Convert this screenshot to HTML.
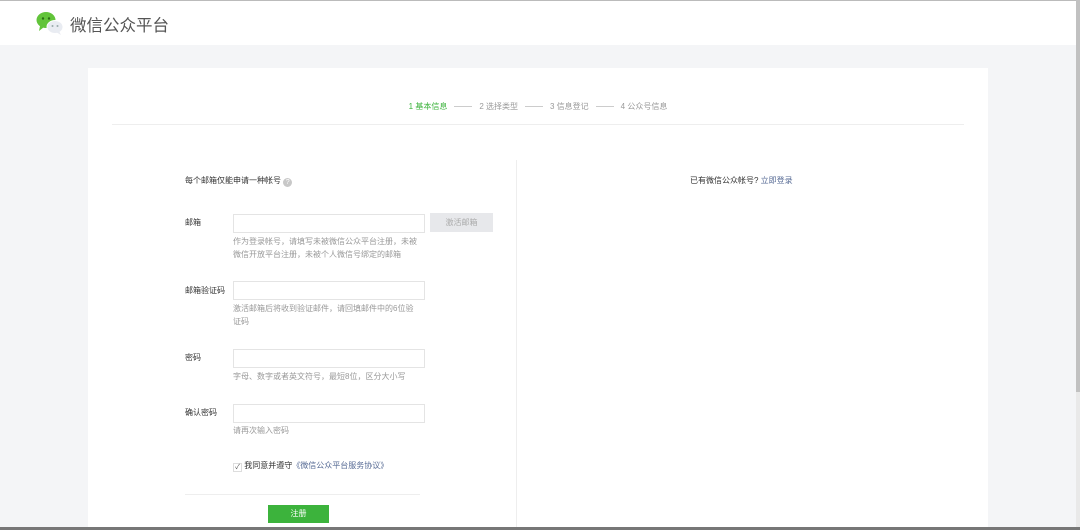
<!DOCTYPE html>
<html><head><meta charset="utf-8"><style>
*{margin:0;padding:0;box-sizing:border-box}
body{width:1080px;height:530px;overflow:hidden;background:#f4f5f7;font-family:"Liberation Sans","Noto Sans CJK SC",sans-serif;position:relative;color:#333}
.top{position:absolute;left:0;top:0;width:1080px;height:1px;background:#bbb}
.hd{position:absolute;left:0;top:1px;width:1076px;height:44px;background:#fff}
.logo{position:absolute;left:70px;top:11px;font-size:16.5px;color:#555}
.sb{position:absolute;right:0;top:0;width:4px;height:530px;background:#e9e9e9}
.sb i{position:absolute;left:0;top:0;width:4px;height:392px;background:#c1c1c1}
.bot{position:absolute;left:0;top:527px;width:1080px;height:3px;background:#777}
.card{position:absolute;left:88px;top:68px;width:900px;height:462px;background:#fff}
.steps{position:absolute;left:0;top:33px;width:900px;text-align:center;font-size:8px;color:#999}
.steps span{margin:0 3px}
.steps .ln{display:inline-block;width:18px;height:1px;background:#ccc;vertical-align:middle;margin:0 4px}
.hr{position:absolute;left:24px;top:56px;width:852px;height:1px;background:#eee}
.vr{position:absolute;left:428px;top:92px;width:1px;height:370px;background:#eee}
.t{position:absolute;font-size:8px;white-space:nowrap}
.lab{color:#333}
.tip{color:#999;line-height:13px;white-space:normal;width:180px}
.inp{position:absolute;width:192px;height:19px;border:1px solid #e4e4e4;background:#fff}
.btn{position:absolute;left:342px;top:145px;width:63px;height:19px;background:#e7e8eb;color:#aaa;font-size:8px;text-align:center;line-height:19px}
.reg{position:absolute;left:180px;top:437px;width:61px;height:18px;background:#3cb33c;color:#fff;font-size:8px;text-align:center;line-height:18px}
a{color:#576b95;text-decoration:none}
</style></head><body>
<div class="top"></div>
<div class="hd">
<svg style="position:absolute;left:35px;top:10px" width="30" height="24" viewBox="0 0 30 24">
<ellipse cx="11" cy="9" rx="9.5" ry="8" fill="#62c43a"/><path d="M5 15 L4 20 L9 16Z" fill="#62c43a"/>
<circle cx="8" cy="7.5" r="1.2" fill="#2a6e14"/><circle cx="14" cy="7.5" r="1.2" fill="#2a6e14"/>
<ellipse cx="20" cy="16" rx="8" ry="6.5" fill="#e9ecf2" stroke="#fff" stroke-width="1"/><path d="M24 20 L26 24 L21 21Z" fill="#e9ecf2"/>
<circle cx="17.5" cy="15" r="1" fill="#9aa"/><circle cx="22.5" cy="15" r="1" fill="#9aa"/></svg>
<div class="logo">微信公众平台</div>
</div>
<div class="card">
<div class="steps"><span style="color:#3cb33c">1 基本信息</span><i class="ln"></i><span>2 选择类型</span><i class="ln"></i><span>3 信息登记</span><i class="ln"></i><span>4 公众号信息</span></div>
<div class="hr"></div>
<div class="vr"></div>
<div class="t lab" style="left:97px;top:107px">每个邮箱仅能申请一种帐号 <span style="display:inline-block;width:9px;height:9px;border-radius:50%;background:#c8c8c8;color:#fff;font-size:7px;text-align:center;line-height:9px;vertical-align:-1px">?</span></div>
<div class="t" style="left:602px;top:107px;color:#333">已有微信公众帐号? <a>立即登录</a></div>
<div class="t lab" style="left:97px;top:149px">邮箱</div>
<div class="inp" style="left:145px;top:146px"></div>
<div class="btn">激活邮箱</div>
<div class="t tip" style="left:145px;top:167px;width:185px">作为登录帐号，请填写未被微信公众平台注册，未被微信开放平台注册，未被个人微信号绑定的邮箱</div>
<div class="t lab" style="left:97px;top:217px">邮箱验证码</div>
<div class="inp" style="left:145px;top:213px"></div>
<div class="t tip" style="left:145px;top:234px;width:185px">激活邮箱后将收到验证邮件，请回填邮件中的6位验证码</div>
<div class="t lab" style="left:97px;top:284px">密码</div>
<div class="inp" style="left:145px;top:281px"></div>
<div class="t tip" style="left:145px;top:302px;width:220px">字母、数字或者英文符号，最短8位，区分大小写</div>
<div class="t lab" style="left:97px;top:339px">确认密码</div>
<div class="inp" style="left:145px;top:336px"></div>
<div class="t tip" style="left:145px;top:356px">请再次输入密码</div>
<div class="t" style="left:145px;top:392px;color:#333"><span style="display:inline-block;width:9px;height:9px;border:1px solid #ddd;font-size:7px;line-height:8px;text-align:center;color:#555;vertical-align:-1px">✓</span> 我同意并遵守<a>《微信公众平台服务协议》</a></div>
<div style="position:absolute;left:97px;top:426px;width:235px;height:1px;background:#eee"></div>
<div class="reg">注册</div>
</div>
<div class="sb"><i></i></div>
<div class="bot"></div>
</body></html>
